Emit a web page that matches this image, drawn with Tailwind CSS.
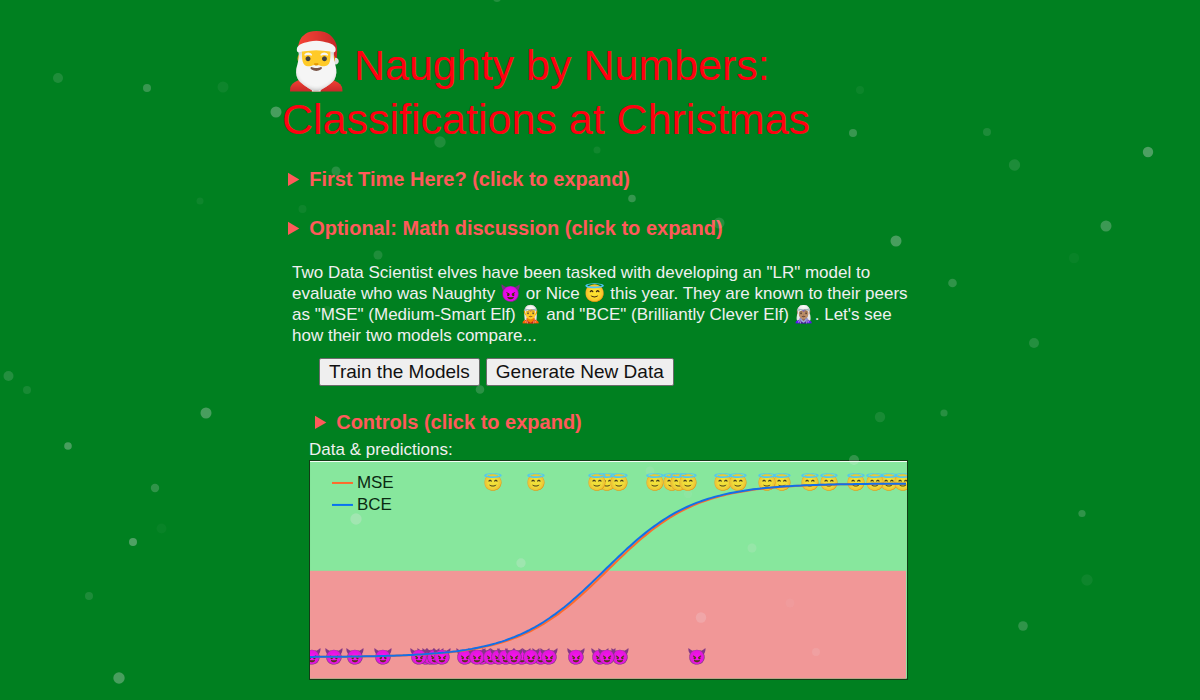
<!DOCTYPE html>
<html lang="en">
<head>
<meta charset="utf-8">
<meta name="viewport" content="width=device-width, initial-scale=1">
<title>Naughty by Numbers: Classifications at Christmas</title>
<script src="https://cdn.jsdelivr.net/npm/@tailwindcss/browser@4"></script>
</head>
<body class="relative min-h-screen bg-[#008020] text-[17px] leading-[21px] text-[#f0f0f0] font-['Liberation_Sans',Arial,'Noto_Color_Emoji',sans-serif]">
<main class="mx-auto max-w-[660px] px-3 pt-[38px] pb-5">
  <h1 class="text-[43px] leading-[54px] text-[#ff0010]"><span class="inline-block w-[60px] text-[55px] leading-0 whitespace-nowrap">🎅</span> Naughty by Numbers: Classifications at Christmas</h1>
  <details class="mt-[21px] ml-1.5">
    <summary class="cursor-pointer text-[20px] leading-6 font-bold text-[#ff5a5a]">First Time Here? (click to expand)</summary>
    <p class="py-2">Train both models, then compare how each one sorts the names.</p>
  </details>
  <details class="mt-[25px] ml-1.5">
    <summary class="cursor-pointer text-[20px] leading-6 font-bold text-[#ff5a5a]">Optional: Math discussion (click to expand)</summary>
    <p class="py-2">Both models fit a logistic curve, with different loss functions.</p>
  </details>
  <p class="mt-[22px] ml-2.5">Two Data Scientist elves have been tasked with developing an "LR" model to evaluate who was Naughty 😈 or Nice 😇 this year. They are known to their peers as "MSE" (Medium-Smart Elf) 🧝 and "BCE" (Brilliantly Clever Elf) 🧝🏽‍♀️. Let's see how their two models compare...</p>
  <div class="mr-2.5 ml-[27px]">
    <div class="mt-3 ml-2.5 flex gap-1.5 text-[19px] text-[#111]">
      <button type="button" class="h-7 rounded-[2px] border border-[#6b6b6b] bg-[#efefef] px-[9px] leading-6">Train the Models</button>
      <button type="button" class="h-7 rounded-[2px] border border-[#6b6b6b] bg-[#efefef] px-[9px] leading-6">Generate New Data</button>
    </div>
    <details class="mt-6 ml-1.5">
      <summary class="cursor-pointer text-[20px] leading-6 font-bold text-[#ff5a5a]">Controls (click to expand)</summary>
      <p class="py-2">Learning rate and number of training steps.</p>
    </details>
    <p class="mt-[5px]">Data &amp; predictions:</p>
    <svg class="block w-full border border-[#123d16]" viewBox="0 0 598 218" role="img" aria-label="Data and predictions of both models">
      <rect width="598" height="218" fill="#87e79d"/>
      <rect y="110" width="597" height="108" fill="#f19797"/>
      <rect width="598" height="1" fill="#f4fff6"/>
      <g id="points" font-size="16" text-anchor="middle" opacity=".9"></g>
      <path id="mse" fill="none" stroke="#ff6a2b" stroke-width="2"/>
      <path id="bce" fill="none" stroke="#1270e8" stroke-width="2"/>
      <path d="M22 22h21" stroke="#ff6a2b" stroke-width="2"/>
      <path d="M22 44h21" stroke="#0a72f0" stroke-width="2"/>
      <g font-size="17" fill="#0b2a12"><text x="47" y="27">MSE</text><text x="47" y="49">BCE</text></g>
    </svg>
  </div>
</main>
<svg id="snow" class="pointer-events-none absolute inset-0 h-full w-full" fill="#f0e4f0" aria-hidden="true"></svg>
<script>
  const NS = 'http://www.w3.org/2000/svg';
  const points = document.getElementById('points');
  const plot = (emoji, y, xs) => xs.forEach(x => {
    const t = document.createElementNS(NS, 'text');
    t.setAttribute('x', x);
    t.setAttribute('y', y);
    t.textContent = emoji;
    points.append(t);
  });
  plot('😇', 27, [184, 227, 298, 288, 310, 346, 363, 370, 379, 414, 429, 473, 458, 501, 520, 547, 580, 566, 594]);
  plot('😈', 201, [2, 24, 45, 73, 117, 122, 126, 110, 133, 173, 156, 168, 182, 190, 213, 197, 232, 205, 222, 240, 267, 291, 311, 298, 388]);

  const curve = (id, mid, scale) => {
    let d = '';
    for (let x = 0; x <= 597; x += 3) {
      const y = 196.5 - 174 / (1 + Math.exp((mid - x) / scale));
      d += (x ? 'L' : 'M') + x + ' ' + y.toFixed(1);
    }
    document.getElementById(id).setAttribute('d', d);
  };
  curve('mse', 298, 44.5);
  curve('bce', 295, 44.5);

  // x, y, radius, opacity
  [[58,78,5,.13],[147,88,4,.23],[223,87,5.5,.06],[276,112,5.5,.3],[200,201,3.5,.06],[8.5,376,5,.15],[27,390,4,.1],
   [206,413,5.5,.3],[68,446,3.8,.3],[155,488,4.2,.2],[161.500,528.5,5,.03],[133,542,4,.33],[89,596,4,.12],[119,678,5.7,.3],
   [860,90,4,.05],[853,133,4,.23],[987,132,4,.12],[1014.5,165,5.7,.12],[1148,152,5.2,.32],[896,241,5.5,.3],[1106,226,5.5,.25],
   [1074,258,5.2,.03],[952.5,283,4.3,.2],[1034,343,5,.15],[880,417,5.2,.1],[944,413,3.6,.16],[854,460,5,.2],[1082,513.5,3.6,.2],
   [1087,580,5.7,.06],[1023,626,4.8,.2],[440,142,5.7,.13],[597,150,3.5,.07],[336,171,4.5,.16],[302.5,209,4,.06],[632,198.5,3.8,.22],
   [719,223,5.5,.14],[378,255,4.5,.13],[480,389.5,4.3,.18],[497,-2,4,.15],[356,519,5.7,.25],[521,563,4.7,.22],[752,548,4.5,.14],
   [790,603,4.5,.06],[701,617.5,5.2,.2],[816,652,4,.12],[688,494,4,.07],[650,471,4.5,.1],[327,310,4,.06]
  ].forEach(([cx, cy, r, o]) => {
    const c = document.createElementNS(NS, 'circle');
    c.setAttribute('cx', cx);
    c.setAttribute('cy', cy);
    c.setAttribute('r', r);
    c.setAttribute('opacity', o);
    document.getElementById('snow').append(c);
  });
</script>
</body>
</html>
